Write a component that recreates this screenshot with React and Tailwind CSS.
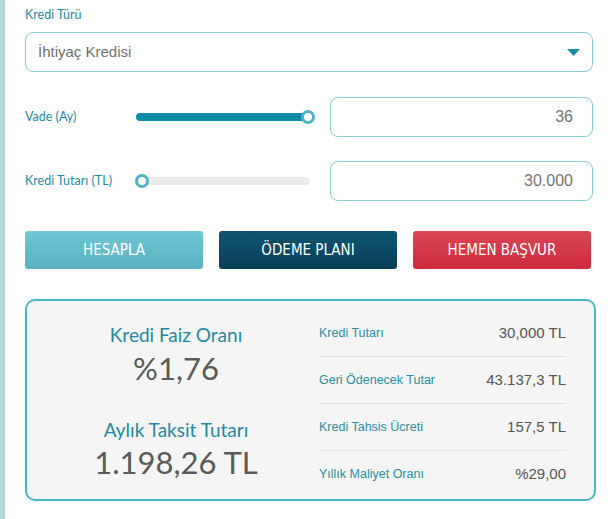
import { useState } from 'react';

const labelFont = { fontFamily: 'Lato, "Open Sans", sans-serif' };

const Slider = ({ percent, filled }) => (
  <div className="relative h-[8px] w-[174px] shrink-0 rounded-full bg-[#ebebeb]">
    {filled && (
      <div className="h-full rounded-full bg-[#0e8ba6]" style={{ width: `${percent}%` }} />
    )}
    <div
      className="absolute top-1/2 h-[14px] w-[14px] -translate-x-1/2 -translate-y-1/2 rounded-full border-[3px] border-[#4fb3c6] bg-white"
      style={{ left: `calc(${percent}% ${percent > 50 ? '- 2px' : '+ 6px'})` }}
    />
  </div>
);

const App = () => {
  const [vade] = useState('36');
  const [tutar] = useState('30.000');

  const rows = [
    { label: 'Kredi Tutarı', value: '30,000 TL' },
    { label: 'Geri Ödenecek Tutar', value: '43.137,3 TL' },
    { label: 'Kredi Tahsis Ücreti', value: '157,5 TL' },
    { label: 'Yıllık Maliyet Oranı', value: '%29,00' },
  ];

  return (
    <div className="flex min-h-[519px] bg-white" style={{ fontFamily: '"Liberation Sans", Arial, sans-serif' }}>
      <div className="w-[5px] shrink-0 bg-[#b2d6dd]" />
      <div className="w-[591px] shrink-0 pl-[20px] pt-[7px]">
        {/* Kredi Türü */}
        <div className="text-[12.5px] leading-[16px] text-[#1f8aa0]" style={labelFont}>Kredi Türü</div>
        <div className="mt-[9px] flex h-[40px] w-[568px] items-center justify-between rounded-[8px] border border-[#86cbd6] pl-[12px] pr-[12px]">
          <span className="text-[15px] text-[#707070]">İhtiyaç Kredisi</span>
          <svg width="13" height="7" viewBox="0 0 13 7">
            <polygon points="0,0 13,0 6.5,7" fill="#1a8ca3" />
          </svg>
        </div>

        {/* Vade */}
        <div className="mt-[25px] flex h-[40px] items-center">
          <div className="w-[111px] shrink-0 text-[12.5px] text-[#1f8aa0]" style={labelFont}>Vade (Ay)</div>
          <Slider percent={100} filled />
          <div className="ml-[20px] flex h-[40px] w-[263px] shrink-0 items-center justify-end rounded-[8px] border border-[#86cbd6] pr-[19px] text-[16px] text-[#747474]">
            {vade}
          </div>
        </div>

        {/* Kredi Tutarı */}
        <div className="mt-[24px] flex h-[40px] items-center">
          <div className="w-[111px] shrink-0 text-[12.5px] text-[#1f8aa0]" style={labelFont}>Kredi Tutarı (TL)</div>
          <Slider percent={0} />
          <div className="ml-[20px] flex h-[40px] w-[263px] shrink-0 items-center justify-end rounded-[8px] border border-[#86cbd6] pr-[19px] text-[16px] text-[#747474]">
            {tutar}
          </div>
        </div>

        {/* Buttons */}
        <div
          className="mt-[30px] flex gap-[16px] text-[15px] text-white"
          style={{ fontFamily: '"Liberation Sans Narrow", "DejaVu Sans Condensed", "Roboto Condensed", sans-serif' }}
        >
          <button className="h-[38px] w-[178px] shrink-0 rounded-[3px] bg-gradient-to-b from-[#70c6d3] to-[#58b1c2]">HESAPLA</button>
          <button className="h-[38px] w-[178px] shrink-0 rounded-[3px] bg-gradient-to-b from-[#0e5673] to-[#083f56]">ÖDEME PLANI</button>
          <button className="h-[38px] w-[178px] shrink-0 rounded-[3px] bg-gradient-to-b from-[#db4555] to-[#cb2a3c]">HEMEN BAŞVUR</button>
        </div>

        {/* Results */}
        <div className="mt-[30px] flex h-[202px] w-[571px] rounded-[10px] border-2 border-[#4bb5c8] bg-[#f5f5f5] pt-[9px]">
          <div className="w-[282px] shrink-0 pl-[16px] text-center">
            <div className="mt-[13px] text-[19px] leading-[24px] text-[#1f8aa0]" style={labelFont}>Kredi Faiz Oranı</div>
            <div className="mt-[3px] text-[31px] leading-[36px] text-[#5a5a5a]" style={labelFont}>%1,76</div>
            <div className="mt-[32px] text-[19px] leading-[24px] text-[#1f8aa0]" style={labelFont}>Aylık Taksit Tutarı</div>
            <div className="mt-[2px] text-[31px] leading-[36px] text-[#5a5a5a]" style={labelFont}>1.198,26 TL</div>
          </div>
          <div className="w-[257px] shrink-0 pl-[10px]">
            {rows.map((row, i) => (
              <div
                key={row.label}
                className={`flex h-[47px] items-center justify-between ${i < rows.length - 1 ? 'border-b border-[#e3e3e3]' : ''}`}
              >
                <span className="text-[12.5px] text-[#2a8f9f]">{row.label}</span>
                <span className="text-[15px] text-[#555]">{row.value}</span>
              </div>
            ))}
          </div>
        </div>
      </div>
    </div>
  );
};

export default App;
